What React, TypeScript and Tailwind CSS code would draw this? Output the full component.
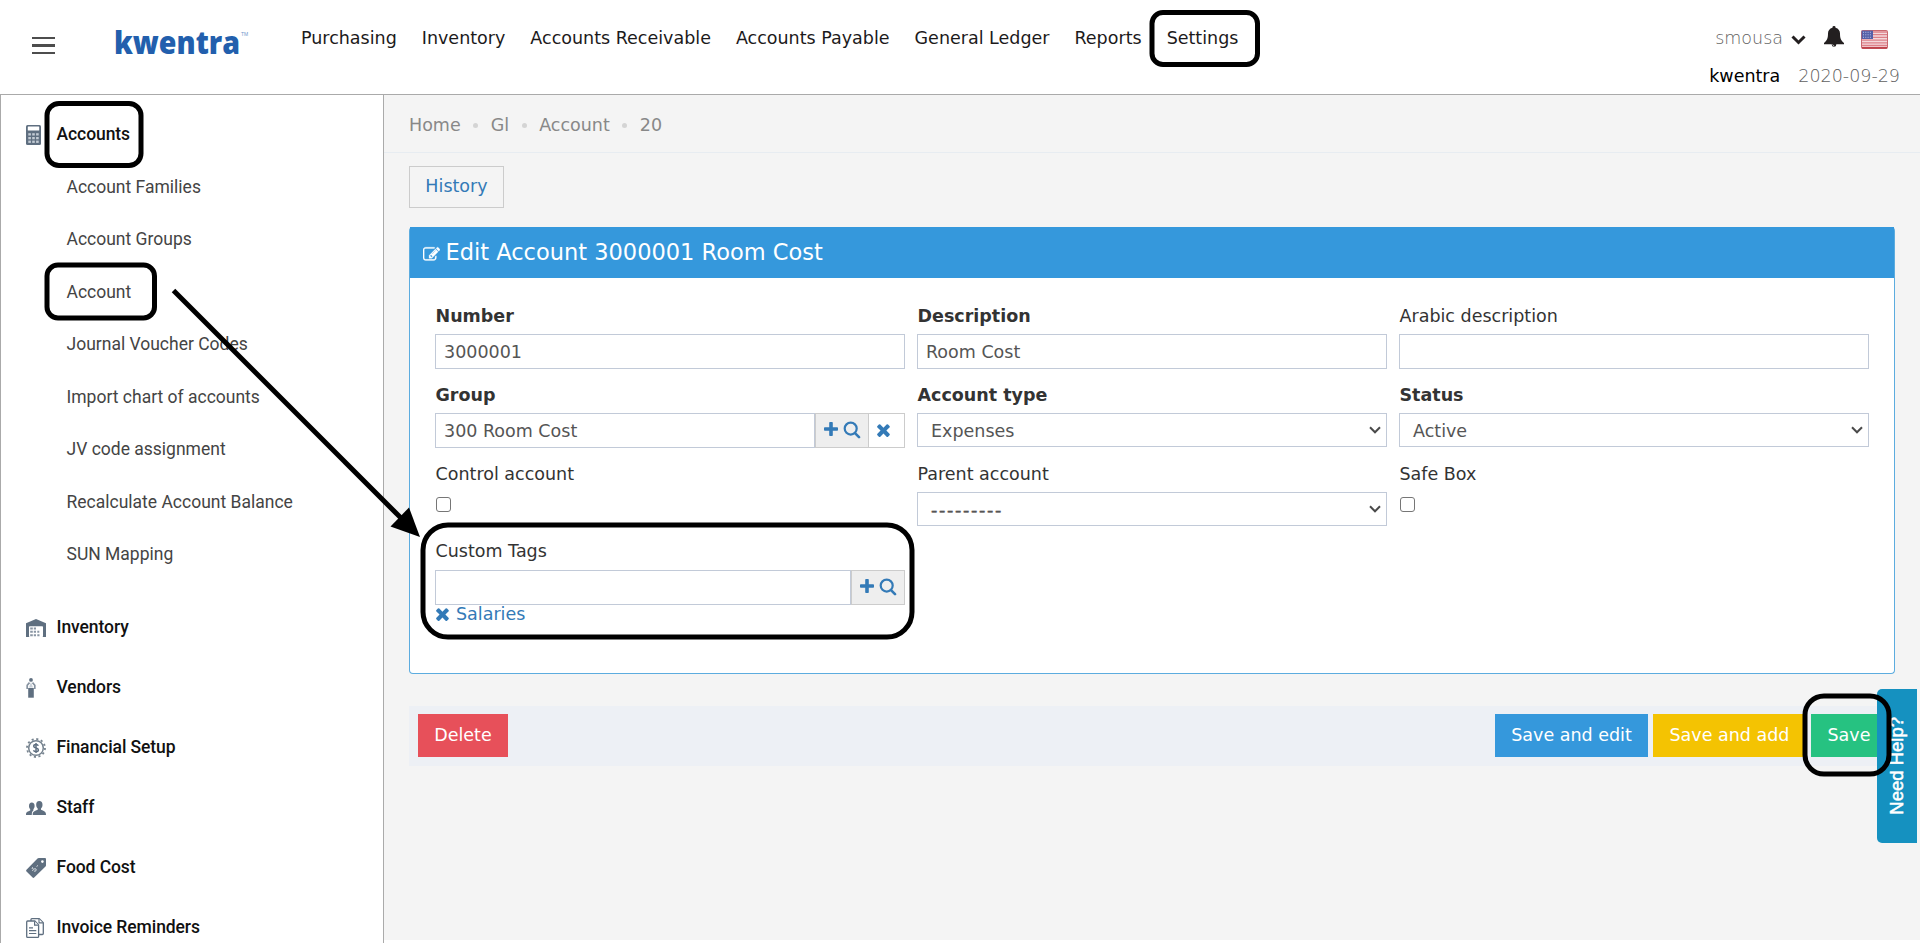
import type { ReactNode } from "react";

const navItems = [
  "Purchasing",
  "Inventory",
  "Accounts Receivable",
  "Accounts Payable",
  "General Ledger",
  "Reports",
  "Settings",
];

const accountLinks = [
  "Account Families",
  "Account Groups",
  "Account",
  "Journal Voucher Codes",
  "Import chart of accounts",
  "JV code assignment",
  "Recalculate Account Balance",
  "SUN Mapping",
];

const crumbs = ["Home", "Gl", "Account", "20"];

/* ---------- glyphs ---------- */

const PlusIcon = () => (
  <svg viewBox="0 0 14 14" className="h-3.5 w-3.5" fill="currentColor">
    <path d="M5.2 0.8q0-.8.8-.8h2q.8 0 .8.8v4.4h4.4q.8 0 .8.8v2q0 .8-.8.8H8.800v4.400q0 .8-.8.8H6q-.8 0-.8-.8V8.800H.8Q0 8.800 0 8V6q0-.8.8-.8h4.400z" />
  </svg>
);

const SearchIcon = () => (
  <svg viewBox="0 0 18 18" className="h-[18px] w-[18px]" fill="none" stroke="currentColor">
    <circle cx="7.700" cy="7.600" r="6" strokeWidth="2.200" />
    <path d="M12 12.200l4 4" strokeWidth="2.600" strokeLinecap="round" />
  </svg>
);

const TimesIcon = () => (
  <svg viewBox="300 340 1200 1220" className="h-[13px] w-[13px]" fill="currentColor">
    <path d="M1490 1322q0 40-28 68l-136 136q-28 28-68 28t-68-28l-294-294-294 294q-28 28-68 28t-68-28l-136-136q-28-28-28-68t28-68l294-294-294-294q-28-28-28-68t28-68l136-136q28-28 68-28t68 28l294 294 294-294q28-28 68-28t68 28l136 136q28 28 28 68t-28 68l-294 294 294 294q28 28 28 68z" />
  </svg>
);

const EditIcon = () => (
  <svg viewBox="0 0 1792 1792" className="h-[17px] w-[17px]" fill="currentColor" stroke="currentColor" strokeWidth="30">
    <path d="M888 1184l116-116-152-152-116 116v56h96v96h56zm440-720q-16-16-33 1l-350 350q-17 17-1 33t33-1l350-350q17-17 1-33zm80 594v190q0 119-84.500 203.500t-203.500 84.500h-832q-119 0-203.500-84.500t-84.500-203.500v-832q0-119 84.500-203.500t203.500-84.500h832q63 0 117 25 15 7 18 23 3 17-9 29l-49 49q-14 14-32 8-23-6-45-6h-832q-66 0-113 47t-47 113v832q0 66 47 113t113 47h832q66 0 113-47t47-113v-126q0-13 9-22l64-64q15-15 35-7t20 29zm-96-738l288 288-672 672h-288v-288zm444 132l-92 92-288-288 92-92q28-28 68-28t68 28l152 152q28 28 28 68t-28 68z" />
  </svg>
);

const BellIcon = () => (
  <svg viewBox="0 0 20 21" className="h-[21px] w-5" fill="#231f20">
    <path d="M10 0a1.500 1.500 0 0 1 1.500 1.700C14.600 2.400 16 4.800 16 7.500c0 4.500.8 6.800 4 9.500v1.200H12.300A2.400 2.400 0 0 1 10 20.800a2.400 2.400 0 0 1-2.300-2.600H0V17c3.200-2.700 4-5 4-9.500 0-2.700 1.400-5.100 4.500-5.800A1.500 1.500 0 0 1 10 0z" />
    <path d="M8.600 18.300q.1 1.400 1.600 1.500" fill="none" stroke="#fff" strokeWidth=".6" />
  </svg>
);

const FlagIcon = () => (
  <svg viewBox="0 0 27 19" className="h-[19px] w-[27px]">
    <rect width="27" height="19" rx="2" fill="#c9686f" />
    <rect x="1" y="1" width="25" height="17" rx="1" fill="#f3d9dc" />
    <path
      d="M1 2h25M1 4.700h25M1 7.400h25M1 10.100h25M1 12.800h25M1 15.500h25"
      stroke="#dd8088"
      strokeWidth="1.300"
    />
    <path d="M1 17.800h25" stroke="#b9333c" strokeWidth="1.400" />
    <rect x=".6" y=".6" width="11.400" height="8.400" fill="#5560a8" />
    <path
      d="M2 2.300h9M2 4.800h9M2 7.300h9"
      stroke="#b9c0e6"
      strokeWidth="1"
      strokeDasharray="1 1.300"
    />
  </svg>
);

const SelectArrow = () => (
  <svg viewBox="0 0 12 8" className="h-2 w-3" fill="none" stroke="#4a4a4a" strokeWidth="2">
    <path d="M1 1.300l5 5 5-5" />
  </svg>
);

const CalculatorIcon = () => (
  <svg viewBox="0 0 15 20" className="h-5 w-[15px]">
    <rect width="15" height="20" rx="1.500" fill="#5f6f80" />
    <rect x="1.800" y="1.500" width="11.400" height="4" rx=".5" fill="#fff" />
    {[8.200, 12, 15.600].map((y) =>
      [2.300, 6.200, 10.100].map((x) => (
        <rect key={`${x}-${y}`} x={x} y={y} width="2.600" height="2.300" fill="#c3cbd4" />
      )),
    )}
  </svg>
);

const WarehouseIcon = () => (
  <svg viewBox="0 0 20 18" className="h-[18px] w-5">
    <path d="M10 0l10 4.200V18H0V4.200z" fill="#5f6f80" />
    <rect x="3" y="7.300" width="14" height="10.700" rx=".8" fill="#fff" />
    <path
      d="M4.200 9.500h2.600M7.800 9.500h2.200M4.200 12.800h2.600M7.800 12.800h2.200M11.300 12.800h2M4.200 16.200h2.600M7.800 16.200h2.200M11.300 16.200h2.200"
      stroke="#8995a3"
      strokeWidth="2"
    />
  </svg>
);

const VendorIcon = () => (
  <svg viewBox="0 0 10 20" className="h-5 w-2.5">
    <circle cx="5" cy="1.900" r="1.900" fill="#5f6f80" />
    <path d="M3.500 4.600L1.200 7.300v3.700M6.500 4.600l2.300 2.700v3.700" fill="none" stroke="#8793a1" strokeWidth="1.700" />
    <path d="M5 4l2 5.500H3z" fill="#c9d0d8" />
    <path d="M2.200 10h5.600v9.700H2.200z" fill="#5f6f80" />
  </svg>
);

const CoinGearIcon = () => (
  <svg viewBox="0 0 20 20" className="h-5 w-5" fill="none" stroke="#76838f">
    <circle cx="10" cy="10" r="7.300" strokeWidth="1.500" />
    <circle cx="10" cy="10" r="9" strokeWidth="1.800" strokeDasharray="2.100 2.612" />
    <path
      d="M12.300 7.700C11.900 6.700 11 6.500 10 6.500c-1.400 0-2.300.6-2.300 1.700 0 2.500 4.700 1.200 4.700 3.700 0 1.100-1 1.700-2.400 1.700-1.200 0-2.100-.4-2.500-1.400M10 5v10"
      stroke="#5f6f80"
      strokeWidth="1.500"
    />
  </svg>
);

const StaffIcon = () => (
  <svg viewBox="0 0 20 14" className="h-3.5 w-5" fill="#5f6f80">
    <path d="M5.800 1.600C7.600 1.600 8.700 3 8.600 5c0 1.400-.5 2.500-1.200 3.200v1.300c-.8.700-1.600 1.600-1.600 3.900V14H0c0-3 .7-3.200 4.200-4.600V8.200C3.400 7.500 3 6.400 3 5c0-2 1-3.400 2.800-3.400z" />
    <path d="M13.300 0c2.100 0 3.300 1.500 3.200 3.800 0 1.700-.6 2.900-1.500 3.600v1.400c3.700 1.400 5 2 5 5.200H6.700c0-3.200 1.200-3.800 5-5.200V7.400c-.9-.7-1.500-1.900-1.500-3.600C10.100 1.500 11.200 0 13.300 0z" />
  </svg>
);

const PriceTagIcon = () => (
  <svg viewBox="0 0 20 20" className="h-5 w-5">
    <path d="M11.500.5Q12 0 12.800 0H19q1 0 1 1v6.200q0 .8-.5 1.300L8.200 19.500q-.8.800-1.600 0L.5 13.400q-.8-.8 0-1.600z" fill="#5f6f80" />
    <circle cx="16.400" cy="3.600" r="1.300" fill="#fff" />
    <path
      d="M7 9.200c-1.500.7-.7 2.300.6 1.900 1.500-.5 2.700-.5 2.600.8 0 1.300-1.700 1.600-2.400.9M6.300 12.700l1-1M10.600 8.500l1.300-1"
      fill="none"
      stroke="#e3e7eb"
      strokeWidth="1"
    />
  </svg>
);

const DocumentsIcon = () => (
  <svg viewBox="0 0 18 20" className="h-5 w-[18px]" fill="#fff" stroke="#5f6f80">
    <path d="M5 3V1.500Q5 .7 5.800.7h7.400l4.100 4v10.800q0 1-1 1H13" strokeWidth="1.300" />
    <path d="M13 .9v4h4" strokeWidth="1.100" />
    <path d="M1.600 3h7.200L12.600 7v11.400q0 .9-.9.9H1.600q-.9 0-.9-.9V3.900q0-.9.9-.9z" strokeWidth="1.300" />
    <path d="M8.600 3.200v4h4M3 9.800h4M3 12.600h7.300M3 15.500h7.300" strokeWidth="1.200" />
  </svg>
);

const sections: { label: string; icon: ReactNode }[] = [
  { label: "Inventory", icon: <WarehouseIcon /> },
  { label: "Vendors", icon: <VendorIcon /> },
  { label: "Financial Setup", icon: <CoinGearIcon /> },
  { label: "Staff", icon: <StaffIcon /> },
  { label: "Food Cost", icon: <PriceTagIcon /> },
  { label: "Invoice Reminders", icon: <DocumentsIcon /> },
];

/* ---------- page parts ---------- */

function Logo() {
  return (
    <div className="mt-[22px] ml-[59px] flex items-start">
      <svg viewBox="0 0 126 40" className="h-10 w-[126px]">
        <text
          x="0"
          y="32"
          textLength="126"
          lengthAdjust="spacingAndGlyphs"
          className="fill-[#225fad] font-['Open_Sans',sans-serif] text-[31px] font-extrabold"
        >
          kwentra
        </text>
      </svg>
      <span className="mt-2.5 ml-px font-['Liberation_Sans',sans-serif] text-[5px] leading-[5px] text-[#6f98cc]">
        TM
      </span>
    </div>
  );
}

function Header() {
  return (
    <header className="flex h-[95px] shrink-0 border-b border-[#aaaaaa] bg-white">
      <div className="flex w-[301px] shrink-0 pl-8">
        <div className="mt-[37px] flex w-[23px] flex-col">
          <span className="h-0.5 bg-[#4d4d4d]" />
          <span className="mt-[5px] h-[3px] bg-[#4d4d4d]" />
          <span className="mt-[5px] h-0.5 bg-[#4d4d4d]" />
        </div>
        <Logo />
      </div>
      <nav className="flex h-[76px] grow items-center gap-[25px] text-[#1c1a1b]">
        {navItems.map((item) => (
          <a key={item} className="whitespace-nowrap">
            {item}
          </a>
        ))}
      </nav>
      <div className="flex shrink-0 flex-col items-end pt-[19px] pr-5">
        <div className="flex h-[38px] items-center pr-3">
          <span className="font-extralight text-[#606060]">smousa</span>
          <svg viewBox="0 0 15 10" className="mt-1 ml-2 h-2.5 w-[15px]" fill="none" stroke="#231f20" strokeWidth="3">
            <path d="M1.500 1.500l6 6 6-6" />
          </svg>
          <span className="-mt-[3px] ml-[18px]">
            <BellIcon />
          </span>
          <span className="mt-1 ml-[17px]">
            <FlagIcon />
          </span>
        </div>
        <div className="flex h-[38px] items-center gap-[18px] pt-0.5">
          <span className="text-black">kwentra</span>
          <span className="font-extralight text-[#606060]">2020-09-29</span>
        </div>
      </div>
    </header>
  );
}

function Section({ icon, label }: { icon: ReactNode; label: string }) {
  return (
    <div className="flex h-[60px] items-center pl-[25px]">
      <span className="flex w-[30.5px] shrink-0 items-center pt-0.5">{icon}</span>
      <span className="font-medium tracking-[-0.08px] text-[#111111]">{label}</span>
    </div>
  );
}

function Sidebar() {
  return (
    <aside className="flex w-96 shrink-0 flex-col overflow-hidden border-x border-[#aaaaaa] bg-white pt-[9px] font-[Roboto,sans-serif]">
      <div className="-mb-[3.5px] shrink-0">
        <Section icon={<CalculatorIcon />} label="Accounts" />
      </div>
      <div className="shrink-0">
        {accountLinks.map((link) => (
          <div key={link} className="flex h-[52.5px] items-center pl-[65.5px] text-[#444444]">
            {link}
          </div>
        ))}
      </div>
      <div className="mt-[16.5px] shrink-0">
        {sections.map((s) => (
          <Section key={s.label} icon={s.icon} label={s.label} />
        ))}
      </div>
    </aside>
  );
}

function Field({ label, bold, children }: { label: string; bold?: boolean; children: ReactNode }) {
  return (
    <div className="mb-3.5 flex flex-col">
      <label className={bold ? "mb-1.5 pl-[0.5px] leading-6 font-bold" : "mb-1.5 pl-[0.5px] leading-6"}>{label}</label>
      {children}
    </div>
  );
}

function TextBox({ value }: { value: string }) {
  return (
    <div className="flex h-[35px] grow items-center border border-[#c2cad8] bg-white px-2 pt-0.5 text-[#555555]">
      {value}
    </div>
  );
}

function SelectBox({ value, spaced }: { value: string; spaced?: boolean }) {
  return (
    <div className="flex h-[34px] items-center justify-between border border-[#c2cad8] bg-white pr-[5px] pl-[13px] text-[#555555]">
      <span className={spaced ? "pt-0.5 tracking-[1.7px] [-webkit-text-stroke:0.5px_#555555]" : "pt-0.5"}>{value}</span>
      <SelectArrow />
    </div>
  );
}

function Checkbox() {
  return <div className="mt-[5px] ml-px h-[15px] w-[15px] rounded-[3px] border border-[#767676] bg-white" />;
}

function LookupAddon() {
  return (
    <div className="flex h-[35px] w-[54px] items-center border border-[#cccccc] bg-[#eeeeee] pb-[3px] pl-2 text-[#337ab7]">
      <PlusIcon />
      <span className="ml-[5px] pt-0.5">
        <SearchIcon />
      </span>
    </div>
  );
}

function EditPanel() {
  return (
    <section className="mt-[19px] flex h-[447px] flex-col rounded border border-t-0 border-[#5cacdf] bg-white">
      <h1 className="flex h-[51px] shrink-0 items-center bg-[#3598dc] pl-[13px] text-[22.5px] text-white">
        <span className="mt-1 mr-[5.5px]">
          <EditIcon />
        </span>
        Edit Account 3000001 Room Cost
      </h1>
      <div className="grid grid-cols-[470px_470px_470px] gap-x-3 pt-[26px] pl-[25px] text-[#333333]">
        <Field label="Number" bold>
          <TextBox value="3000001" />
        </Field>
        <Field label="Description" bold>
          <TextBox value="Room Cost" />
        </Field>
        <Field label="Arabic description">
          <TextBox value="" />
        </Field>
        <Field label="Group" bold>
          <div className="flex">
            <TextBox value="300 Room Cost" />
            <LookupAddon />
            <div className="flex h-[35px] w-9 items-center border border-l-0 border-[#cccccc] bg-white pb-px pl-2 text-[#337ab7]">
              <TimesIcon />
            </div>
          </div>
        </Field>
        <Field label="Account type" bold>
          <SelectBox value="Expenses" />
        </Field>
        <Field label="Status" bold>
          <SelectBox value="Active" />
        </Field>
        <Field label="Control account">
          <Checkbox />
        </Field>
        <Field label="Parent account">
          <SelectBox value="---------" spaced />
        </Field>
        <Field label="Safe Box">
          <Checkbox />
        </Field>
        <div className="flex flex-col">
          <label className="mb-2 pl-[0.5px] leading-[22px]">Custom Tags</label>
          <div className="flex">
            <TextBox value="" />
            <LookupAddon />
          </div>
          <div className="flex h-[18px] items-center gap-[7px] pl-px text-[#337ab7]">
            <TimesIcon />
            <span>Salaries</span>
          </div>
        </div>
      </div>
    </section>
  );
}

function ActionBar() {
  return (
    <div className="mt-8 flex h-[60px] items-center justify-between bg-[#edf0f5] pr-2 pb-px pl-[9px] text-white">
      <button className="flex h-[43px] w-[90px] items-center justify-center bg-[#e7505a]">Delete</button>
      <div className="flex gap-[5px]">
        <button className="flex h-[43px] w-[153px] items-center justify-center bg-[#3598dc]">Save and edit</button>
        <button className="flex h-[43px] w-[153px] items-center justify-center bg-[#f4c302]">Save and add</button>
        <button className="flex h-[43px] w-[76px] items-center justify-center bg-[#26c281]">Save</button>
      </div>
    </div>
  );
}

/* Hand-drawn style highlights that float above the page. */
function Annotations() {
  return (
    <svg
      viewBox="0 0 1920 943"
      className="pointer-events-none absolute top-0 left-0 h-[943px] w-[1920px]"
      fill="none"
      stroke="#000"
      strokeWidth="5"
    >
      <rect x="1152" y="12.500" width="105.500" height="52" rx="11" />
      <rect x="47" y="103.500" width="94" height="62" rx="12" />
      <rect x="47" y="265" width="107.500" height="53" rx="11" />
      <rect x="423" y="525" width="489" height="112" rx="25" />
      <rect x="1805" y="696" width="84" height="78" rx="19" />
      <path d="M173.500 290.500L404 521" />
      <path d="M420 537L390.500 526.500L409 507.500z" fill="#000" stroke="none" />
    </svg>
  );
}

export default function App() {
  return (
    <div className="relative flex h-[943px] w-[1920px] flex-col overflow-hidden bg-white font-['DejaVu_Sans',sans-serif] text-[17.5px]">
      <Header />
      <div className="flex min-h-0 grow">
        <Sidebar />
        <main className="mb-[3px] flex grow flex-col bg-[#f4f4f4]">
          <div className="flex h-[58px] shrink-0 items-center border-b border-[#e7ecf1] pt-[3px] pl-[25px] text-[#888888]">
            {crumbs.map((crumb, i) => (
              <span key={crumb} className="flex items-center">
                {i > 0 && <span className="mr-[12.5px] ml-[12.5px] h-[5px] w-[5px] rounded-full bg-[#d4d4d4]" />}
                {crumb}
              </span>
            ))}
          </div>
          <div className="flex flex-col pt-[13px] pr-[25px] pl-[25px]">
            <button className="flex h-[42px] w-[95px] items-center justify-center border border-[#cccccc] pb-0.5 text-[#337ab7]">
              History
            </button>
            <EditPanel />
            <ActionBar />
          </div>
        </main>
      </div>
      <div className="absolute top-[689px] left-[1877px] flex h-[154px] w-10 items-center justify-center rounded-l-[5px] bg-[#1591c0]">
        <span className="rotate-180 font-['Liberation_Sans',sans-serif] text-[18.5px] text-white [-webkit-text-stroke:0.5px_white] [writing-mode:vertical-rl]">
          Need Help?
        </span>
      </div>
      <Annotations />
    </div>
  );
}
